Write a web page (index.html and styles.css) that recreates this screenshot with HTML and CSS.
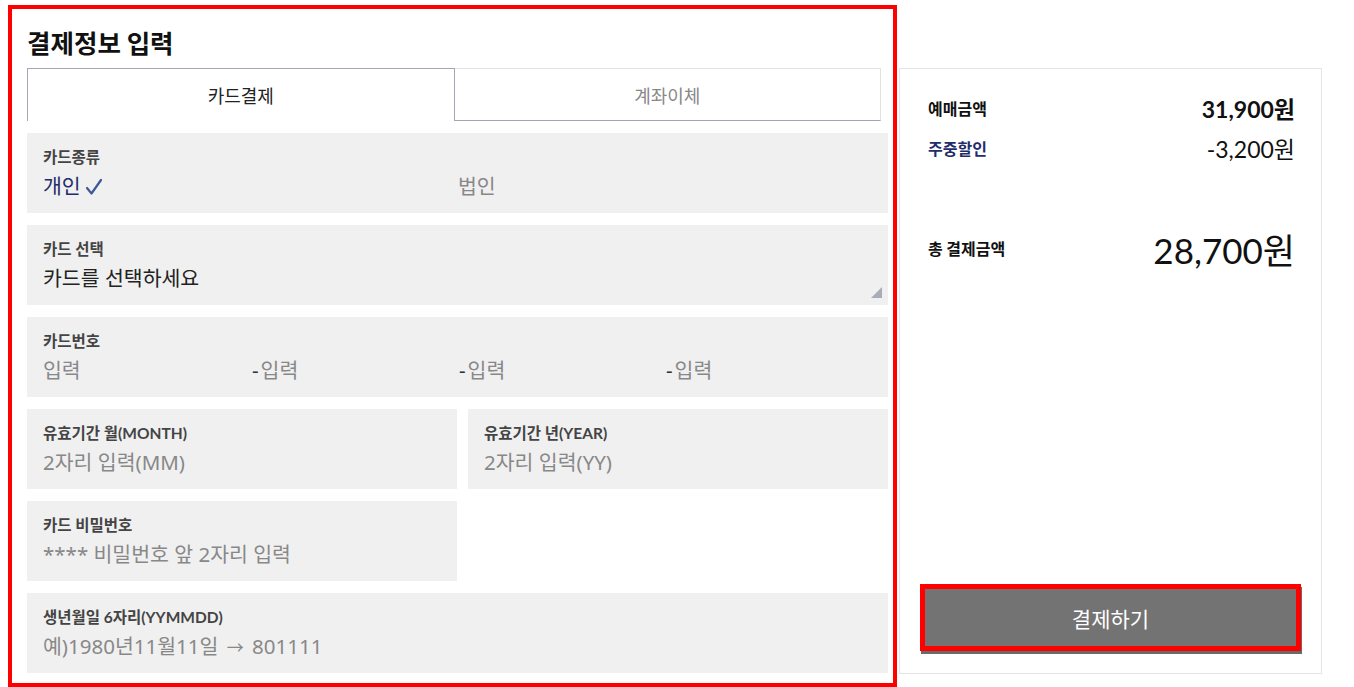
FILE: index.html
```html
<!DOCTYPE html>
<html>
<head>
<title>결제정보 입력</title>
<meta charset="utf-8" />
<link rel="stylesheet" href="styles.css">
</head>
<body>
<div class="page">
<section class="payForm">
	<h2 class="formTitle">결제정보 입력</h2>
	<div class="tabs">
		<div class="tab active">카드결제</div>
		<div class="tab">계좌이체</div>
	</div>
	<div class="field">
		<div class="fieldLabel">카드종류</div>
		<div class="fieldValue typeRow">
			<span class="typeOn">개인<svg class="check" width="18" height="18" viewBox="0 0 18 18"><path d="M2 10 L6.5 15.5 L16 2" fill="none" stroke="#3d5a98" stroke-width="2.2" stroke-linecap="round" stroke-linejoin="round"/></svg></span>
			<span class="typeOff">법인</span>
		</div>
	</div>
	<div class="field selectField">
		<div class="fieldLabel">카드 선택</div>
		<div class="fieldValue dark">카드를 선택하세요</div>
		<span class="resizer"></span>
	</div>
	<div class="field">
		<div class="fieldLabel">카드번호</div>
		<div class="fieldValue numberRow">
			<span>입력</span>
			<span><b class="dash">-</b>입력</span>
			<span><b class="dash">-</b>입력</span>
			<span><b class="dash">-</b>입력</span>
		</div>
	</div>
	<div class="fieldGrid">
		<div class="field">
			<div class="fieldLabel">유효기간 월(MONTH)</div>
			<div class="fieldValue">2자리 입력(MM)</div>
		</div>
		<div class="field">
			<div class="fieldLabel">유효기간 년(YEAR)</div>
			<div class="fieldValue">2자리 입력(YY)</div>
		</div>
		<div class="field">
			<div class="fieldLabel">카드 비밀번호</div>
			<div class="fieldValue">**** 비밀번호 앞 2자리 입력</div>
		</div>
	</div>
	<div class="field last">
		<div class="fieldLabel">생년월일 6자리(YYMMDD)</div>
		<div class="fieldValue">예)1980년11월11일 <span class="arrow">→</span> 801111</div>
	</div>
</section>
<aside class="summary">
	<div class="sumRow">
		<span class="sumLabel">예매금액</span>
		<span class="sumPrice strong">31,900원</span>
	</div>
	<div class="sumRow">
		<span class="sumLabel navy">주중할인</span>
		<span class="sumPrice">-3,200원</span>
	</div>
	<div class="sumRow total">
		<span class="sumLabel">총 결제금액</span>
		<span class="sumPrice big">28,700원</span>
	</div>
	<button class="payBtn">결제하기</button>
</aside>
</div>
</body>
</html>
```

FILE: styles.css
```css
*{
	padding:0;
	margin:0;
	box-sizing:border-box;
}
body{
	font-family:"Noto Sans","Noto Sans CJK KR",sans-serif;
	color:#222;
	background:#fff;
}
.page{
	display:flex;
	align-items:flex-start;
	padding:5px 0 0 8px;
	gap:2px;
}
.payForm{
	width:889px;
	border:4px solid #f00;
	padding:18px 5px 10px 15px;
}
.formTitle{
	font-family:"Noto Sans CJK KR",sans-serif;
	font-size:25.5px;
	line-height:30px;
	font-weight:700;
	color:#111;
	margin-bottom:11px;
}
.tabs{
	display:flex;
	width:854px;
	margin-bottom:12px;
}
.tab{
	flex:1;
	height:53px;
	line-height:53px;
	text-align:center;
	font-family:"Noto Sans CJK KR",sans-serif;
	font-size:18px;
	color:#888;
	border-top:1px solid #e2e2e2;
	border-right:1px solid #e2e2e2;
	border-bottom:1px solid #a3a6b4;
}
.tab.active{
	color:#222;
	border:1px solid #a3a6b4;
	border-bottom:none;
}
.field{
	position:relative;
	background:#f0f0f0;
	height:80px;
	padding:14px 16px 0;
	margin-bottom:12px;
}
.field.last{
	margin-bottom:0;
}
.fieldLabel{
	font-family:Lato,"Noto Sans CJK KR",sans-serif;
	font-size:15.5px;
	font-weight:700;
	line-height:20px;
	color:#444;
	margin-bottom:5px;
}
.fieldValue{
	font-size:20.5px;
	line-height:28px;
	color:#888;
}
.fieldValue.dark{
	color:#222;
}
.arrow{
	font-size:17px;
	padding:0 3px;
}
.typeRow{
	display:flex;
}
.typeOn{
	display:flex;
	align-items:center;
	width:415px;
	color:#1f2d6b;
}
.check{
	margin-left:4px;
	margin-top:1px;
}
.typeOff{
	color:#888;
}
.resizer{
	position:absolute;
	right:6px;
	bottom:7px;
	width:0;
	height:0;
	border-left:11px solid transparent;
	border-bottom:11px solid #a8abb8;
}
.numberRow{
	display:grid;
	grid-template-columns:209px 207px 207px 1fr;
}
.dash{
	font-weight:400;
	color:#333;
	margin-right:2px;
}
.fieldGrid{
	display:grid;
	grid-template-columns:430px 1fr;
	column-gap:11px;
}
.summary{
	margin-top:63px;
	width:423px;
	height:606px;
	border:1px solid #e5e5e5;
	padding:26px 20px 19px;
	display:flex;
	flex-direction:column;
}
.sumRow{
	display:flex;
	justify-content:space-between;
	align-items:center;
	margin:0 6px 14px 8px;
	height:26px;
}
.sumRow.total{
	margin-top:53px;
	height:40px;
}
.sumLabel{
	font-family:"Noto Sans CJK KR",sans-serif;
	font-size:16px;
	font-weight:700;
	color:#111;
}
.sumLabel.navy{
	color:#1f2d6b;
}
.sumPrice{
	font-family:Lato,"Noto Sans CJK KR",sans-serif;
	font-size:23px;
	color:#111;
}
.sumPrice.strong{
	font-weight:700;
}
.sumPrice.big{
	font-size:35px;
}
.payBtn{
	margin-top:auto;
	height:67px;
	border:5px solid #f00;
	background:#737373;
	box-shadow:1px 3px 0 #6a6a6a;
	color:#fff;
	font-family:"Noto Sans CJK KR",sans-serif;
	font-size:21px;
	margin-bottom:3px;
}
```
